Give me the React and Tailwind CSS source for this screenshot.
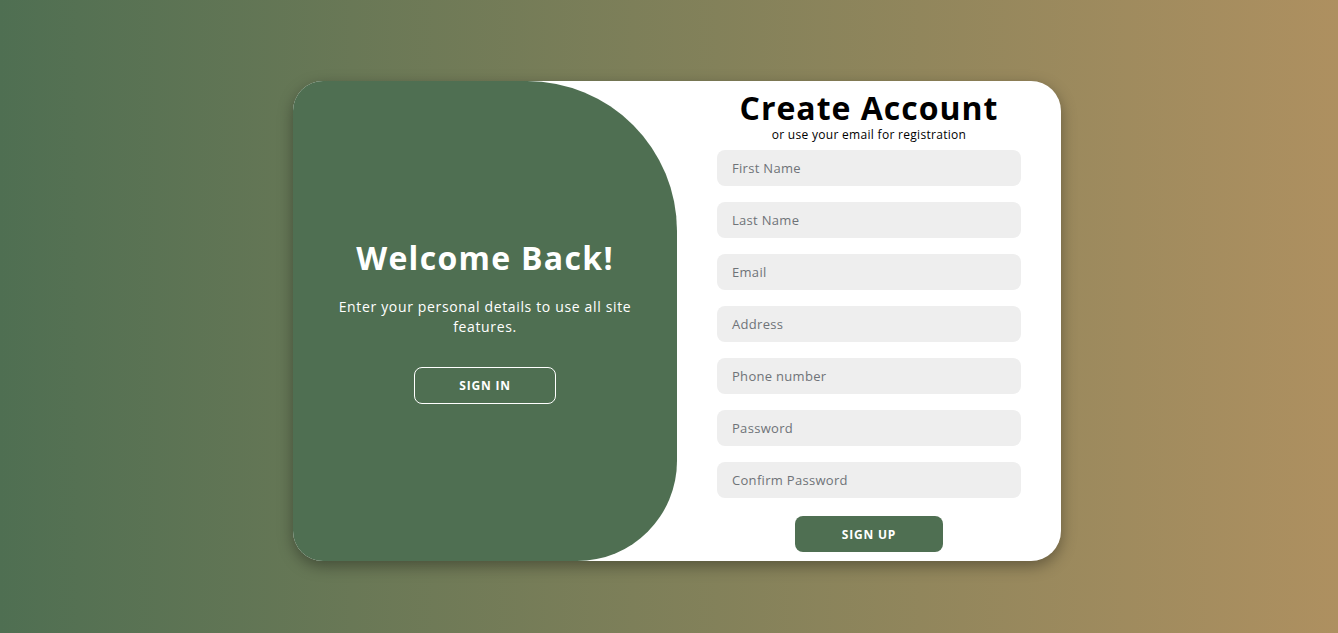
import React from "react";

const font = { fontFamily: '"Open Sans", "Noto Sans", sans-serif' };

export default function App() {
  const fields = [
    "First Name",
    "Last Name",
    "Email",
    "Address",
    "Phone number",
    "Password",
    "Confirm Password",
  ];
  return (
    <div
      className="w-full h-[633px] bg-gradient-to-r from-[#4f6f52] to-[#ae9060] flex justify-center pl-[16px] pt-[81px] overflow-hidden"
      style={font}
    >
      <div className="w-[768px] h-[480px] bg-white rounded-[30px] shadow-[0_5px_15px_rgba(0,0,0,0.35)] overflow-hidden flex">
        <div className="w-[384px] h-full bg-[#4f6f52] rounded-tr-[150px] rounded-br-[100px] flex flex-col items-center justify-center px-[30px] text-center text-white">
          <h1 className="text-[32px] font-bold leading-[39px] tracking-[1.3px]">Welcome Back!</h1>
          <p className="text-[14px] leading-[20px] tracking-[0.65px] my-[20px] w-[320px]">
            Enter your personal details to use all site features.
          </p>
          <button className="mt-[10px] w-[142px] h-[37px] border border-white rounded-[8px] text-[12px] font-bold uppercase tracking-[0.8px] text-white">
            Sign In
          </button>
        </div>
        <div className="w-[384px] h-full flex flex-col items-center px-[40px] pt-[9px]">
          <h1 className="text-[32px] font-bold leading-[36px] tracking-[1px] text-black">Create Account</h1>
          <span className="mt-[1px] text-[12px] leading-[15px] tracking-[0.3px] text-black">or use your email for registration</span>
          <div className="w-full flex flex-col mt-[8px] gap-[16px]">
            {fields.map((f) => (
              <div
                key={f}
                className="w-full h-[36px] bg-[#eeeeee] rounded-[8px] px-[15px] pt-[2px] flex items-center text-[13px] tracking-[0.3px] text-[#6f7378]"
              >
                {f}
              </div>
            ))}
          </div>
          <button className="mt-[18px] w-[148px] h-[36px] bg-[#4f6f52] rounded-[8px] pt-[1px] text-[12px] font-bold uppercase tracking-[0.8px] text-white">
            Sign Up
          </button>
        </div>
      </div>
    </div>
  );
}
